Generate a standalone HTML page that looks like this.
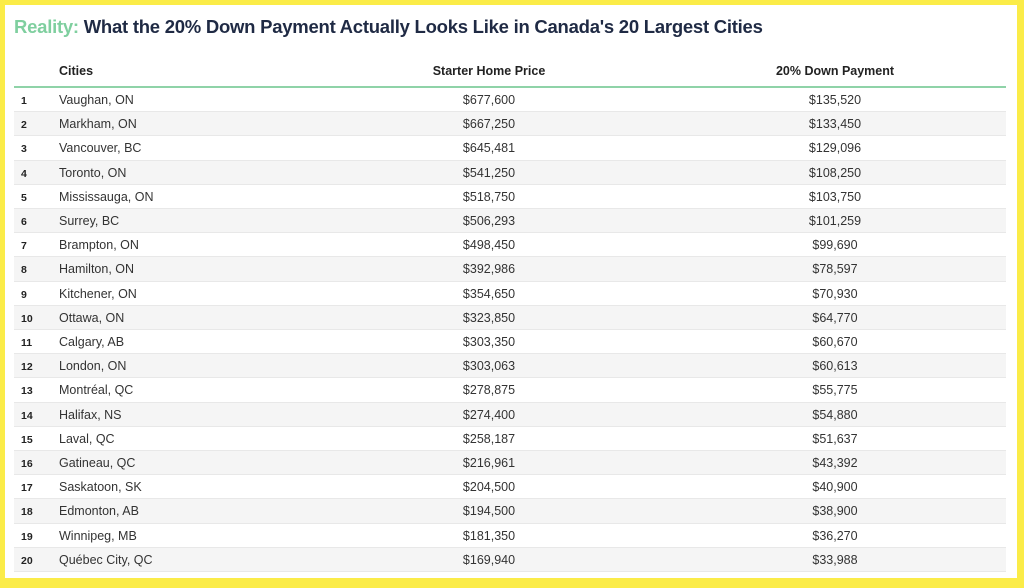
<!DOCTYPE html>
<html><head><meta charset="utf-8"><style>
*{margin:0;padding:0;box-sizing:border-box}
body{width:1024px;height:588px;background:#fff;font-family:"Liberation Sans",Arial,sans-serif;position:relative;overflow:hidden}
.frame{position:absolute;left:0;top:0;width:1024px;height:588px;border:5px solid #fbec48;border-bottom-width:10px;border-right-width:7px}
h1{position:absolute;left:14px;top:16px;font-size:18.5px;font-weight:bold;color:#1f2a44;letter-spacing:-0.25px;white-space:nowrap}
h1 span{color:#7fcf9f}
.hdr{position:absolute;top:64px;font-size:12.5px;font-weight:bold;color:#222}
.line{position:absolute;left:14px;width:992px;top:86px;height:2px;background:#8fd3a8}
.row{position:absolute;left:14px;width:992px;height:24.2px;border-bottom:1px solid #e8e8e8;font-size:12.5px;color:#333}
.row.e{background:#f5f5f5}
.row div{position:absolute;top:5px;white-space:nowrap}
.n{left:7px;font-weight:bold;font-size:10.5px;top:7px!important;color:#222}
.c{left:45px}
.p{left:375px;width:200px;text-align:center}
.d{left:721px;width:200px;text-align:center}
</style></head><body>
<h1><span>Reality:</span> What the 20% Down Payment Actually Looks Like in Canada's 20 Largest Cities</h1>
<div class="hdr" style="left:59px">Cities</div>
<div class="hdr" style="left:389px;width:200px;text-align:center">Starter Home Price</div>
<div class="hdr" style="left:735px;width:200px;text-align:center">20% Down Payment</div>
<div class="line"></div>
<div id="t"></div>
<script>
var d=[["Vaughan, ON","$677,600","$135,520"],["Markham, ON","$667,250","$133,450"],["Vancouver, BC","$645,481","$129,096"],["Toronto, ON","$541,250","$108,250"],["Mississauga, ON","$518,750","$103,750"],["Surrey, BC","$506,293","$101,259"],["Brampton, ON","$498,450","$99,690"],["Hamilton, ON","$392,986","$78,597"],["Kitchener, ON","$354,650","$70,930"],["Ottawa, ON","$323,850","$64,770"],["Calgary, AB","$303,350","$60,670"],["London, ON","$303,063","$60,613"],["Montréal, QC","$278,875","$55,775"],["Halifax, NS","$274,400","$54,880"],["Laval, QC","$258,187","$51,637"],["Gatineau, QC","$216,961","$43,392"],["Saskatoon, SK","$204,500","$40,900"],["Edmonton, AB","$194,500","$38,900"],["Winnipeg, MB","$181,350","$36,270"],["Québec City, QC","$169,940","$33,988"]];
var h="";d.forEach(function(r,i){h+='<div class="row'+(i%2?' e':'')+'" style="top:'+(88+i*24.2)+'px"><div class="n">'+(i+1)+'</div><div class="c">'+r[0]+'</div><div class="p">'+r[1]+'</div><div class="d">'+r[2]+'</div></div>';});
document.getElementById("t").innerHTML=h;
</script>
<div class="frame"></div>
</body></html>
